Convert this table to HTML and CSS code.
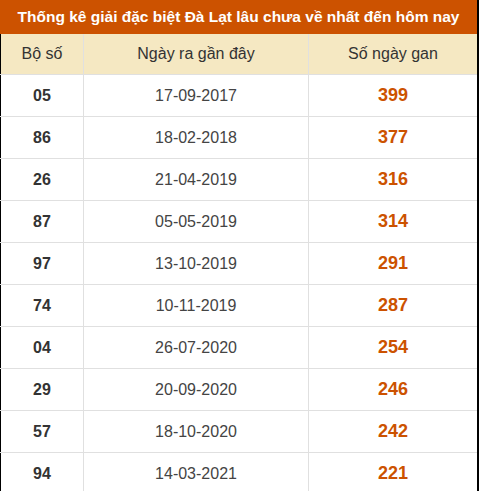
FILE: index.html
```html
<!DOCTYPE html>
<html lang="vi">
<head>
<meta charset="utf-8">
<link rel="stylesheet" href="styles.css">
</head>
<body>
<div class="wrap">
  <div class="title">Thống kê giải đặc biệt Đà Lạt lâu chưa về nhất đến hôm nay</div>
  <table class="stats">
    <thead>
      <tr><th class="c1">Bộ số</th><th class="c2">Ngày ra gần đây</th><th class="c3">Số ngày gan</th></tr>
    </thead>
    <tbody>
      <tr><td class="num">05</td><td class="date">17-09-2017</td><td class="gan">399</td></tr>
      <tr><td class="num">86</td><td class="date">18-02-2018</td><td class="gan">377</td></tr>
      <tr><td class="num">26</td><td class="date">21-04-2019</td><td class="gan">316</td></tr>
      <tr><td class="num">87</td><td class="date">05-05-2019</td><td class="gan">314</td></tr>
      <tr><td class="num">97</td><td class="date">13-10-2019</td><td class="gan">291</td></tr>
      <tr><td class="num">74</td><td class="date">10-11-2019</td><td class="gan">287</td></tr>
      <tr><td class="num">04</td><td class="date">26-07-2020</td><td class="gan">254</td></tr>
      <tr><td class="num">29</td><td class="date">20-09-2020</td><td class="gan">246</td></tr>
      <tr><td class="num">57</td><td class="date">18-10-2020</td><td class="gan">242</td></tr>
      <tr><td class="num">94</td><td class="date">14-03-2021</td><td class="gan">221</td></tr>
    </tbody>
  </table>
</div>
</body>
</html>
```

FILE: styles.css
```css
html, body {
  margin: 0;
  padding: 0;
  background: #fff;
}
body {
  font-family: "Liberation Sans", Arial, sans-serif;
}
.wrap {
  width: 477px;
  border-right: 2px solid #000;
  height: 491px;
  box-sizing: content-box;
}
.title {
  height: 34px;
  line-height: 34px;
  background: #cc5200;
  color: #fff;
  font-weight: bold;
  font-size: 15.5px;
  text-align: center;
  white-space: nowrap;
}
.stats {
  width: 477px;
  border-collapse: collapse;
  table-layout: fixed;
  border-left: 1px solid #000;
  border-bottom: 1px solid #000;
}
.stats th, .stats td {
  text-align: center;
  padding: 0;
  border: 1px solid #e0e0e0;
}
.stats tr > :first-child { border-left: 1px solid #000; }
.stats tr > :last-child { border-right: none; }
.stats tbody tr:last-child td { border-bottom: 1px solid #000; }
.stats thead th { border-top: none; }
.c1 { width: 82px; }
.c2 { width: 224px; }
.stats th {
  height: 40px;
  background: #f5e8c2;
  color: #333;
  font-weight: normal;
  font-size: 16px;
}
.stats td {
  height: 41px;
  font-size: 16px;
}
.num {
  font-weight: bold;
  color: #333;
}
.date {
  color: #444;
}
.gan {
  font-weight: bold;
  color: #cc5200;
  font-size: 18px !important;
}
```
